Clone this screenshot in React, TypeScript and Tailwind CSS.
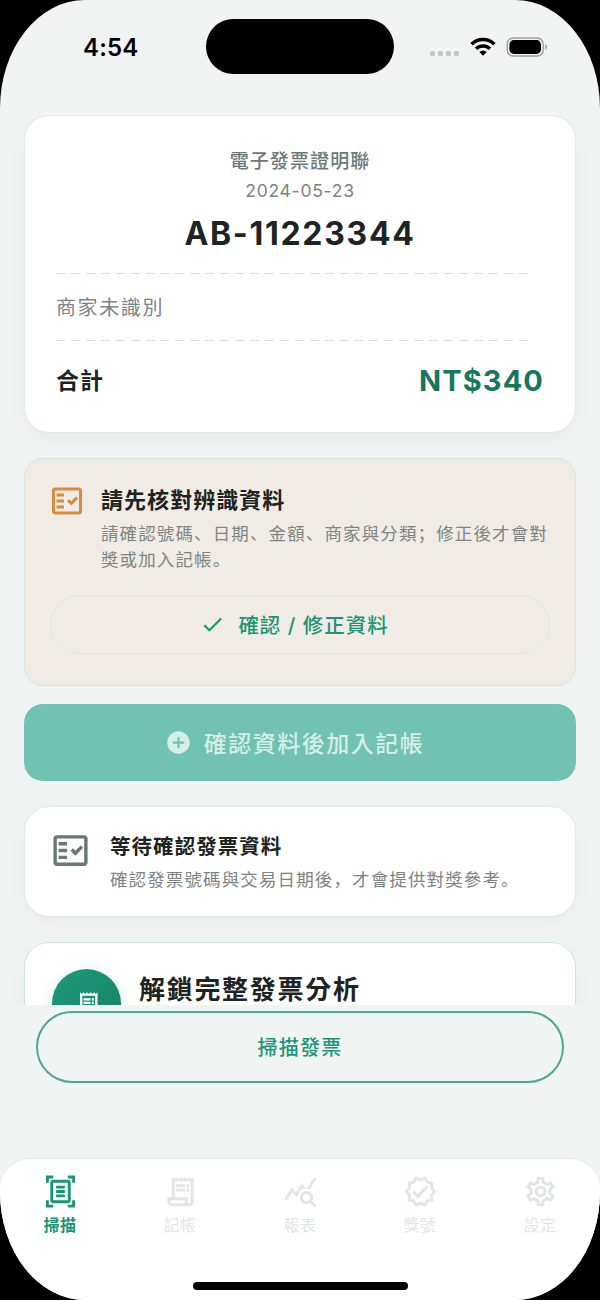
import type { ReactNode } from "react";
import type { IconType } from "react-icons";
import {
  MdAddCircle,
  MdCheck,
  MdOutlineDocumentScanner,
  MdOutlineFactCheck,
  MdOutlineReceiptLong,
  MdOutlineSettings,
  MdOutlineVerified,
  MdQueryStats,
} from "react-icons/md";

type Tab = {
  label: string;
  icon: IconType;
  active?: boolean;
};

const tabs: Tab[] = [
  { label: "掃描", icon: MdOutlineDocumentScanner, active: true },
  { label: "記帳", icon: MdOutlineReceiptLong },
  { label: "報表", icon: MdQueryStats },
  { label: "獎號", icon: MdOutlineVerified },
  { label: "設定", icon: MdOutlineSettings },
];

function StatusBar() {
  return (
    <header className="flex h-[115px] shrink-0 items-start pt-[19px]">
      <div className="flex h-[55px] w-[206px] items-center pt-0.5 pl-[83px] text-[24px] font-semibold tracking-[0.2px] text-black">
        4:54
      </div>
      <div className="h-[55px] w-[188px] rounded-full bg-black" />
      <div className="flex h-[55px] items-center pl-9">
        <div className="mt-[13px] flex gap-[3px]">
          {[0, 1, 2, 3].map((dot) => (
            <span className="size-[5px] rounded-[1.5px] bg-[#c3c7c7]" key={dot} />
          ))}
        </div>
        <svg className="ml-[11px] h-[19px] w-[26px]" viewBox="0 0 26 19" fill="none" stroke="#000" strokeWidth="3.6">
          <path d="M1.6 7.2a16.3 16.3 0 0 1 22.8 0" />
          <path d="M6 11.8a10 10 0 0 1 14 0" />
          <path d="M13 18.8l-3.7-3.7a5.2 5.2 0 0 1 7.4 0z" fill="#000" stroke="none" />
        </svg>
        <svg className="ml-[10px] h-5 w-[42px]" viewBox="0 0 42 20" fill="none">
          <rect x="1.2" y="1" width="36" height="18" rx="6" stroke="#999d9c" strokeWidth="1.4" />
          <rect x="3.4" y="3.1" width="31.6" height="13.8" rx="4.4" fill="#000" />
          <path d="M39.4 7.3c2 .8 2 4.6 0 5.4z" fill="#999d9c" />
        </svg>
      </div>
    </header>
  );
}

function DashedRule() {
  return (
    <div className="flex w-[472px] justify-between">
      {Array.from({ length: 32 }, (_, i) => (
        <span className="h-px w-[9px] bg-[#d9e0df]" key={i} />
      ))}
    </div>
  );
}

function Card({ className, children }: { className: string; children: ReactNode }) {
  return (
    <section
      className={`shrink-0 rounded-[25px] border bg-white shadow-[0_8px_22px_rgba(30,50,45,0.04)] ${className}`}
    >
      {children}
    </section>
  );
}

function ReceiptCard() {
  return (
    <Card className="h-[318px] border-[#e0e8e6] px-[31px] pt-[31px]">
      <div className="flex flex-col items-center">
        <p className="h-[30px] text-[19px] leading-[30px] font-medium tracking-[1.1px] text-[#6b7a76]">電子發票證明聯</p>
        <p className="h-[29px] text-[17.5px] leading-[27px] tracking-[0.75px] text-[#7c8583]">2024-05-23</p>
        <p className="h-[56px] text-[32px] leading-[56px] font-bold tracking-[1.7px] text-[#1d2422]">AB-11223344</p>
      </div>
      <div className="mt-[11px]">
        <DashedRule />
      </div>
      <p className="h-[66px] text-[20px] leading-[69px] tracking-[1.6px] text-[#7c8583]">商家未識別</p>
      <DashedRule />
      <div className="flex h-[79px] items-center justify-between">
        <span className="pt-0.5 text-[23px] font-bold tracking-[1px] text-[#1d2422]">合計</span>
        <span className="text-[29px] font-bold tracking-[1.1px] text-[#17775c]">NT$340</span>
      </div>
    </Card>
  );
}

function ReviewCard() {
  return (
    <section className="mt-[25px] h-[228px] shrink-0 rounded-[19px] border border-[#d5e7e1] bg-[#f0ece5] px-[25px] pt-[24px]">
      <div className="flex">
        <MdOutlineFactCheck className="-ml-px size-9 shrink-0 text-[#d98a41]" />
        <div className="ml-4 w-[452px]">
          <h2 className="h-[34px] text-[22px] leading-[34px] font-bold tracking-[1.05px] text-[#1d2422]">請先核對辨識資料</h2>
          <p
            className="mt-[3px] font-['Noto_Sans_CJK_SC',sans-serif] text-[17.5px] leading-[26px] tracking-[1.12px] whitespace-nowrap text-[#7f8681]"
            lang="zh-Hans"
          >
            請確認號碼、日期、金額、商家與分類；修正後才會對
            <br />
            獎或加入記帳。
          </p>
        </div>
      </div>
      <button className="mt-[23px] flex h-[59px] w-full items-center justify-center rounded-full border border-[#dbe7df] pr-[11px] text-[#1c9576]">
        <MdCheck className="size-[25px]" />
        <span className="ml-[13px] pt-[3px] text-[20.4px] font-medium tracking-[1.05px]">確認 / 修正資料</span>
      </button>
    </section>
  );
}

function PendingCard() {
  return (
    <Card className="mt-[25px] flex h-[111px] border-[#e0e8e6] px-[25px] pt-[23px]">
      <MdOutlineFactCheck className="size-[41px] shrink-0 text-[#667a74]" />
      <div className="ml-[19px]">
        <h2 className="h-8 text-[20.5px] leading-[34px] font-bold tracking-[1.05px] text-[#1d2422]">等待確認發票資料</h2>
        <p
          className="mt-px font-['Noto_Sans_CJK_SC',sans-serif] text-[17.5px] leading-8 tracking-[1.12px] whitespace-nowrap text-[#7c8583]"
          lang="zh-Hans"
        >
          確認發票號碼與交易日期後，才會提供對獎參考。
        </p>
      </div>
    </Card>
  );
}

function UnlockCard() {
  return (
    <Card className="mt-[25px] flex h-[130px] border-[#cfe6df] px-[27px] pt-[26px]">
      <div className="flex size-[69px] shrink-0 items-center justify-center rounded-full bg-linear-to-br from-[#1d9c7c] to-[#157e63] shadow-[0_4px_16px_rgba(24,140,110,0.16)]">
        <MdOutlineReceiptLong className="size-7 text-white" />
      </div>
      <h2 className="ml-[18px] text-[26px] leading-[42px] font-bold tracking-[1.7px] text-[#1d2422]">解鎖完整發票分析</h2>
    </Card>
  );
}

function TabBar() {
  return (
    <nav className="flex h-[142px] shrink-0 flex-col items-center rounded-t-[30px] border-t border-[#e3e9e8] bg-white">
      <div className="grid w-full grid-cols-5 pt-[15px]">
        {tabs.map(({ label, icon: Icon, active }) => (
          <div
            className={`flex flex-col items-center ${active ? "font-bold text-[#1c9576]" : "text-[#dfe6e4]"}`}
            key={label}
          >
            <Icon className="size-[35px]" />
            <span className="text-[16px] leading-8 tracking-[0.6px]">{label}</span>
          </div>
        ))}
      </div>
      <div className="mt-[41px] h-2 w-[215px] rounded-full bg-black" />
    </nav>
  );
}

export default function App() {
  return (
    <div className="h-[1300px] w-[600px] bg-black" lang="zh-Hant">
      <div className="flex h-full flex-col overflow-hidden rounded-[85px/108px] bg-[#f0f4f3] font-['Inter','Noto_Sans_CJK_TC',sans-serif]">
        <StatusBar />
        <main className="flex h-[890px] shrink-0 flex-col overflow-hidden px-6">
          <ReceiptCard />
          <ReviewCard />
          <button className="mt-[18px] flex h-[77px] shrink-0 items-center justify-center rounded-[19px] bg-[#71c2b2] pr-[11px] text-[#d5eee8]">
            <MdAddCircle className="size-[27px]" />
            <span className="ml-3 pt-[3px] text-[23px] font-medium tracking-[1.5px]">確認資料後加入記帳</span>
          </button>
          <PendingCard />
          <UnlockCard />
        </main>
        <div className="h-[153px] shrink-0 px-9 pt-1.5">
          <button className="h-[72px] w-full rounded-full border-2 border-[#4aa98e] pt-0.5 text-[20px] font-medium tracking-[1.3px] text-[#1c9576]">
            掃描發票
          </button>
        </div>
        <TabBar />
      </div>
    </div>
  );
}
